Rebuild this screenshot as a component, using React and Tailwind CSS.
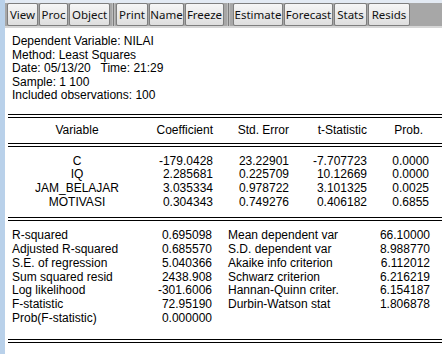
const buttons = [
  [["View", 31], ["Proc", 29], ["Object", 41]],
  [["Print", 32], ["Name", 35], ["Freeze", 39]],
  [["Estimate", 50], ["Forecast", 49], ["Stats", 33], ["Resids", 42]],
];

const coefs = [
  ["C", "-179.0428", "23.22901", "-7.707723", "0.0000"],
  ["IQ", "2.285681", "0.225709", "10.12669", "0.0000"],
  ["JAM_BELAJAR", "3.035334", "0.978722", "3.101325", "0.0025"],
  ["MOTIVASI", "0.304343", "0.749276", "0.406182", "0.6855"],
];

const stats = [
  ["R-squared", "0.695098", "Mean dependent var", "66.10000"],
  ["Adjusted R-squared", "0.685570", "S.D. dependent var", "8.988770"],
  ["S.E. of regression", "5.040366", "Akaike info criterion", "6.112012"],
  ["Sum squared resid", "2438.908", "Schwarz criterion", "6.216219"],
  ["Log likelihood", "-301.6006", "Hannan-Quinn criter.", "6.154187"],
  ["F-statistic", "72.95190", "Durbin-Watson stat", "1.806878"],
  ["Prob(F-statistic)", "0.000000", "", ""],
];

function DoubleRule() {
  return <div className="ml-[3px] h-[4px] border-t border-b border-black" />;
}

export default function App() {
  return (
    <div className="flex h-[354px] w-[442px] overflow-hidden bg-white font-['Liberation_Sans',Arial,sans-serif] text-[12px] text-black">
      <div className="w-[5px] shrink-0 bg-[#b9d1ea]" />
      <div className="flex flex-1 flex-col">
        {/* toolbar */}
        <div className="h-[3px] bg-[#e3eaf3]" />
        <div className="flex h-[23px] items-stretch bg-[#a7a7a7] pl-[2px]">
          {buttons.map((group, gi) => (
            <div key={gi} className="flex items-stretch">
              {gi > 0 && (
                <div className={`flex items-stretch justify-center ${gi === 1 ? "w-[6px]" : "w-[9px]"}`}>
                  <div className="w-[3px] border-x border-[#bdbdbd] bg-[#7c7c7c]" />
                </div>
              )}
              <div className="flex gap-[1px]">
                {group.map(([label, w]) => (
                  <div
                    key={label}
                    style={{ width: w }}
                    className="flex items-center justify-center rounded-[2px] border border-[#7e7e7e] bg-gradient-to-b from-[#f6f6f6] to-[#dedede] font-['Noto_Sans',sans-serif] text-[11.5px] leading-none text-[#111]"
                  >
                    {label}
                  </div>
                ))}
              </div>
            </div>
          ))}
        </div>
        <div className="h-[2px] bg-[#d6d6d6]" />

        {/* header info */}
        <div className="mt-[7px] pl-[7px] leading-[13.6px]">
          <div>Dependent Variable: NILAI</div>
          <div>Method: Least Squares</div>
          <div>Date: 05/13/20&nbsp;&nbsp; Time: 21:29</div>
          <div>Sample: 1 100</div>
          <div>Included observations: 100</div>
        </div>

        <div className="mt-[11px]">
          <DoubleRule />
        </div>

        {/* coefficient table */}
        <div className="ml-[3px] grid grid-cols-[138px_67px_76px_78px_62px] pb-[5px] pt-[6px] leading-[13.6px]">
          <div className="text-center">Variable</div>
          <div className="text-right">Coefficient</div>
          <div className="text-right">Std. Error</div>
          <div className="text-right">t-Statistic</div>
          <div className="pr-[6px] text-right">Prob.</div>
        </div>
        <DoubleRule />
        <div className="ml-[3px] grid grid-cols-[138px_67px_76px_78px_62px] pb-[8px] pt-[8px] leading-[13.7px]">
          {coefs.map((r) => (
            <div key={r[0]} className="contents">
              <div className="text-center">{r[0]}</div>
              <div className="text-right">{r[1]}</div>
              <div className="text-right">{r[2]}</div>
              <div className="text-right">{r[3]}</div>
              <div className="text-right">{r[4]}</div>
            </div>
          ))}
        </div>
        <DoubleRule />

        {/* summary statistics */}
        <div className="ml-[7px] grid grid-cols-[128px_72px_16px_140px_62px] pb-[13px] pt-[8px] leading-[13.75px]">
          {stats.map((r) => (
            <div key={r[0]} className="contents">
              <div>{r[0]}</div>
              <div className="text-right">{r[1]}</div>
              <div />
              <div>{r[2]}</div>
              <div className="text-right">{r[3] || "\u00a0"}</div>
            </div>
          ))}
        </div>
        <DoubleRule />
      </div>
    </div>
  );
}
